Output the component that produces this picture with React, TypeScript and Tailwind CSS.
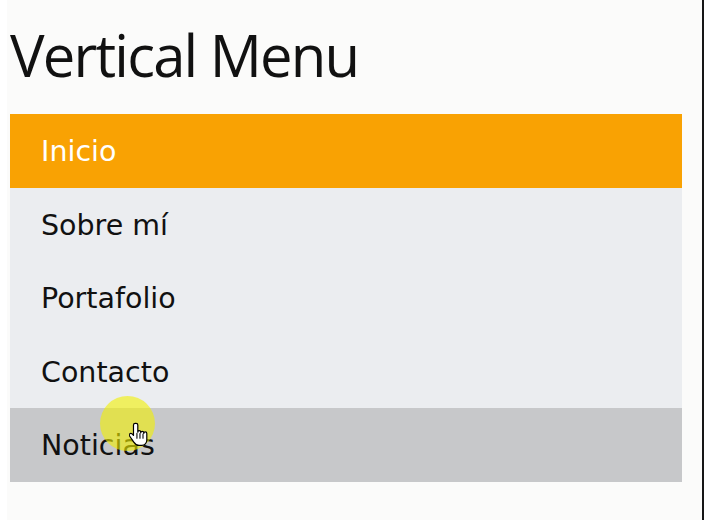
import React from 'react';

const items = ['Inicio', 'Sobre mí', 'Portafolio', 'Contacto', 'Noticias'];

const HandCursor: React.FC = () => (
    <svg width="20" height="26" viewBox="0 0 18 24" className="block">
        <path
            d="M5.5 1.2c-.9 0-1.6.7-1.6 1.6v9.6l-1.3-1.4c-.6-.6-1.6-.7-2.2-.1-.6.6-.6 1.4-.1 2l3.9 5.6c1.1 1.6 2.6 3.1 4.8 3.1h2.6c2.6 0 4.6-2.1 4.6-4.7v-6.4c0-.8-.6-1.4-1.4-1.4s-1.4.6-1.4 1.4v-.5c0-.8-.6-1.4-1.4-1.4s-1.4.6-1.4 1.4v-.6c0-.8-.6-1.4-1.4-1.4s-1.3.6-1.3 1.4V2.8c0-.9-.7-1.6-1.6-1.6z"
            fill="#fff"
            stroke="#000"
            strokeWidth="1.1"
            strokeLinejoin="round"
        />
        <path d="M7.1 10.5v4.5M9.9 10.6v4.4M12.7 11.2v3.8" stroke="#000" strokeWidth="1" strokeLinecap="round" />
    </svg>
);

export default function App() {
    return (
        <div className="min-h-screen bg-white">
            {/* captured page area */}
            <div className="relative ml-[7px] w-[697px] h-[520px] bg-[#fbfbfa] border-r-2 border-[#161616] pl-[3px]">
                <h1
                    className="pt-[18px] pb-[22px] text-[58px] leading-[74px] font-normal text-[#111] tracking-[-1.8px]"
                    style={{ fontFamily: '"Open Sans", Lato, sans-serif' }}
                >
                    Vertical Menu
                </h1>

                <ul className="w-[672px]" style={{ fontFamily: '"DejaVu Sans", Verdana, sans-serif' }}>
                    {items.map((label, i) => (
                        <li
                            key={label}
                            className={`px-[31px] pt-[21px] pb-[19px] text-[28.5px] leading-[33.6px] ${
                                i === 0
                                    ? 'bg-[#f9a203] text-white'
                                    : i === 4
                                    ? 'bg-[#c7c8ca] text-[#111]'
                                    : 'bg-[#ebedf0] text-[#111]'
                            }`}
                        >
                            {label}
                        </li>
                    ))}
                </ul>

                {/* click highlight + pointer over "Noticias" */}
                <div className="absolute left-[93px] top-[396px] w-[55px] h-[55px] rounded-full bg-[#f2f000]/60" />
                <div className="absolute left-[122px] top-[422px]">
                    <HandCursor />
                </div>
            </div>
        </div>
    );
}
